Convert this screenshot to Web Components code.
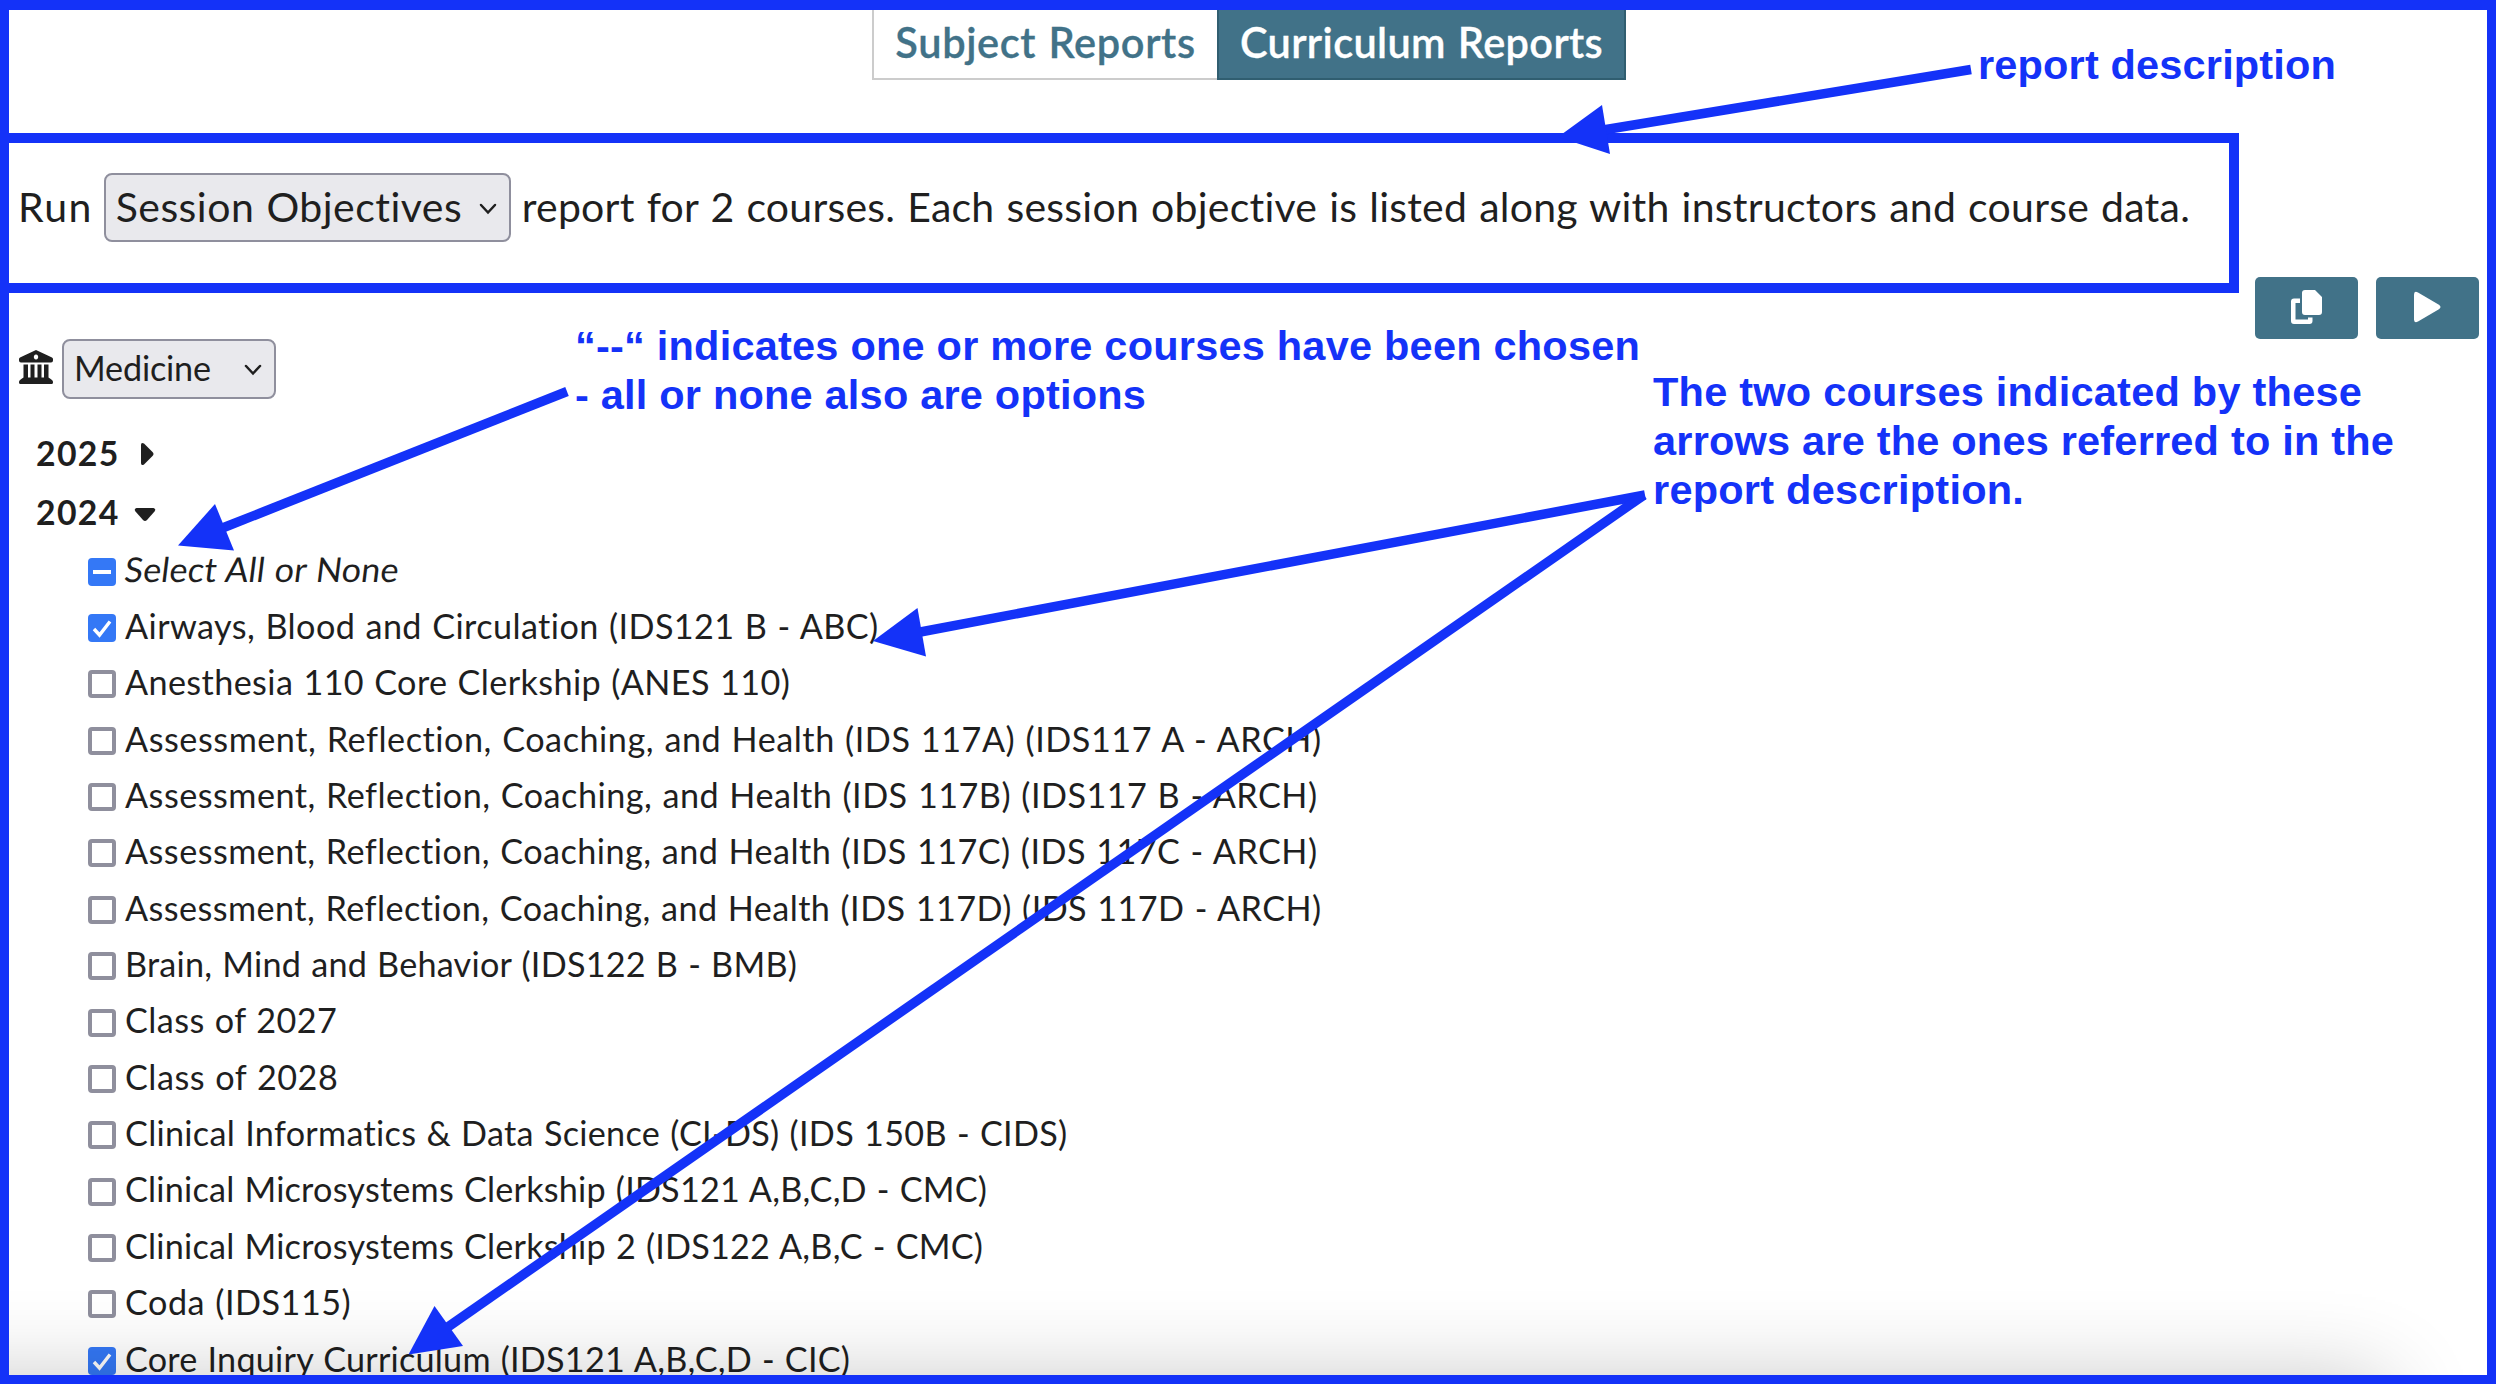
<!DOCTYPE html>
<html lang="en">
<head>
<meta charset="utf-8">
<title>Curriculum Reports</title>
<style>
html,body{margin:0;padding:0}
body{width:2496px;height:1384px;overflow:hidden;background:#fff;font-family:Lato,"Noto Sans",sans-serif;color:#1f1f1f}
</style>
</head>
<body>
<reports-page></reports-page>
<script>
// Text run that spreads its letters evenly to fill a given width.
class FitText extends HTMLElement{
  constructor(){
    super();
    this.attachShadow({mode:'open'}).innerHTML=`<style>:host{display:inline-block;white-space:pre;word-spacing:var(--word-gap,.03em)}</style><span><slot></slot></span>`;
  }
  connectedCallback(){
    const target=parseFloat(this.getAttribute('w'));
    const n=this.textContent.length;
    const natural=this.shadowRoot.querySelector('span').getBoundingClientRect().width;
    if(target&&natural)this.style.letterSpacing=((target-natural)/(n-.5)).toFixed(4)+'px';
  }
}

class ReportTab extends HTMLElement{
  constructor(){
    super();
    this.attachShadow({mode:'open'}).innerHTML=`<style>
      :host{display:flex;justify-content:center;box-sizing:border-box;height:70px;width:345px;border:2px solid #ccc;border-top:0;border-right:0;background:#fff;color:#417288;font-size:41.5px;font-weight:600;line-height:64px;-webkit-text-stroke:.3px currentColor}
      :host([active]){width:409px;background:#417288;border:2px solid #305e70;border-top:0;color:#fff}
    </style><slot></slot>`;
  }
}

class DropDown extends HTMLElement{
  constructor(){
    super();
    this.attachShadow({mode:'open'}).innerHTML=`<style>
      :host{display:flex;align-items:center;justify-content:space-between;box-sizing:border-box;background:#e9e9ed;border:2px solid #8f8f9d;border-radius:8px;padding:0 12px 2px 10px}
      svg{display:block;margin-top:4px}
    </style><slot></slot><svg width="18" height="12" viewBox="0 0 18 12"><path d="M2 2l7 7.5L16 2" fill="none" stroke="#1f1f1f" stroke-width="2.5" stroke-linecap="round"/></svg>`;
  }
}

class IconButton extends HTMLElement{
  constructor(){
    super();
    this.attachShadow({mode:'open'}).innerHTML=`<style>:host{display:flex;align-items:center;justify-content:center;box-sizing:border-box;width:103px;height:62px;padding-bottom:3px;border-radius:5px;background:#417288}</style><slot></slot>`;
  }
}

class CheckRow extends HTMLElement{
  connectedCallback(){
    const state=this.getAttribute('state');
    const mark=state==='on'?'<path d="M6 15l5.5 6L22 7.5" fill="none" stroke="#fff" stroke-width="3.4"/>':
      state==='mixed'?'<path d="M5 14h18" stroke="#fff" stroke-width="4"/>':'';
    const box=state?'<rect width="28" height="28" rx="4" fill="#3478f6"/>':
      '<rect x="2" y="2" width="24" height="24" rx="2" fill="#fff" stroke="#8f8f9d" stroke-width="4"/>';
    this.attachShadow({mode:'open'}).innerHTML=`<style>
      :host{display:flex;align-items:center;height:56.36px;line-height:57.4px;font-size:34.2px;gap:9px;flex:none}
      :host([state=mixed]) ::slotted(*){transform:skewX(-7deg)}
      svg{display:block;margin-top:5px}
    </style><svg width="28" height="28" viewBox="0 0 28 28">${box}${mark}</svg><slot></slot>`;
  }
}

class YearRow extends HTMLElement{
  constructor(){
    super();
    this.attachShadow({mode:'open'}).innerHTML=`<style>
      :host{display:flex;align-items:center;height:59px;line-height:59px;font-size:33.8px;font-weight:700;padding-left:27px}
      ::slotted(*){margin-top:2px}
      svg{display:block;margin-left:14px;margin-top:2px;overflow:visible}
    </style><slot></slot><svg width="22" height="24" viewBox="0 0 22 24"><path fill="#1f1f1f"/></svg>`;
  }
  connectedCallback(){
    this.shadowRoot.querySelector('path').setAttribute('d',this.hasAttribute('open')
      ?'M2.5 7h17q3 1 1 3.500l-7.500 8.500q-2 2-4 0L1.500 10.500Q-.5 8 2.500 7z'
      :'M7 3q0-3 3-1.500l8.500 8.500q2 2 0 4L10 22.500Q7 24 7 21z');
  }
}

// Hand-placed arrows and notes floating over the page.
class NoteLayer extends HTMLElement{
  constructor(){
    super();
    this.attachShadow({mode:'open'}).innerHTML=`<style>
      :host{position:absolute;inset:0;--word-gap:0px;color:#1432f8;font:bold 41.5px/48.800px "Liberation Sans",Arial,sans-serif}
      svg{position:absolute;inset:0}
      div{position:absolute;display:flex;flex-direction:column;align-items:flex-start}
    </style>
    <svg width="2496" height="1384" viewBox="0 0 2496 1384" fill="#1432f8" stroke="none">
      <g stroke="#1432f8" stroke-width="9.500">
        <path d="M1600 130.500L1971 69.500"/><path d="M220 529L567 391.500"/><path d="M915 633L1645 495"/><path d="M445 1329L1644 495"/>
      </g>
      <path d="M1558 137L1602 105L1610 154z"/>
      <path d="M178 545.500L215 504L234 550.500z"/>
      <path d="M873 641L917.500 608L926 656.500z"/>
      <path d="M408.500 1354.500L434.500 1306L463 1346z"/>
    </svg>
    <div style="left:1978px;top:41px"><fit-text w="358">report description</fit-text></div>
    <div style="left:575px;top:322px"><fit-text w="1065">“--“ indicates one or more courses have been chosen</fit-text><fit-text w="571">- all or none also are options</fit-text></div>
    <div style="left:1653px;top:368px"><fit-text w="709">The two courses indicated by these</fit-text><fit-text w="741">arrows are the ones referred to in the</fit-text><fit-text w="371">report description.</fit-text></div>`;
  }
}

const courses=[
  ['Select All or None',279,'mixed'],
  ['Airways, Blood and Circulation (IDS121 B - ABC)',754,'on'],
  ['Anesthesia 110 Core Clerkship (ANES 110)',665],
  ['Assessment, Reflection, Coaching, and Health (IDS 117A) (IDS117 A - ARCH)',1197],
  ['Assessment, Reflection, Coaching, and Health (IDS 117B) (IDS117 B - ARCH)',1193],
  ['Assessment, Reflection, Coaching, and Health (IDS 117C) (IDS 117C - ARCH)',1193],
  ['Assessment, Reflection, Coaching, and Health (IDS 117D) (IDS 117D - ARCH)',1197],
  ['Brain, Mind and Behavior (IDS122 B - BMB)',672],
  ['Class of 2027',212],
  ['Class of 2028',213],
  ['Clinical Informatics & Data Science (CI-DS) (IDS 150B - CIDS)',943],
  ['Clinical Microsystems Clerkship (IDS121 A,B,C,D - CMC)',862],
  ['Clinical Microsystems Clerkship 2 (IDS122 A,B,C - CMC)',858],
  ['Coda (IDS115)',226],
  ['Core Inquiry Curriculum (IDS121 A,B,C,D - CIC)',725,'on']
];

class ReportsPage extends HTMLElement{
  constructor(){
    super();
    this.attachShadow({mode:'open'}).innerHTML=`<style>
      :host{display:block;position:relative;width:2496px;height:1384px;overflow:hidden}
      main{box-sizing:border-box;height:1384px;border:9px solid #1432f8;border-top-width:10px;overflow:hidden;display:flex;flex-direction:column}
      nav{display:flex;padding-left:863px;height:123px;flex:none}
      .run{display:flex;height:206px;flex:none}
      .desc{box-sizing:border-box;width:2230px;height:160px;border:10px solid #1432f8;border-left:0;display:flex;padding:30px 0 0 9px;font-size:41px;line-height:67px}
      .desc drop-down{width:407px;height:69px;margin:0 11px 0 11px}
      .actions{display:flex;gap:18px;margin:144px 0 0 16px}
      .school{display:flex;align-items:center;height:60px;flex:none;padding-left:10px;gap:9px;font-size:34.200px;line-height:56px}
      .school drop-down{width:214px;height:60px}
      .school svg{margin-bottom:4px}
      .years{margin-top:24px;flex:none}
      .list{display:flex;flex-direction:column;padding-left:79px}
      .shade{position:absolute;inset:0 9px 9px;overflow:hidden}
      .shade i{position:absolute;left:-200px;width:2576px;top:1382px;height:300px;box-shadow:0 0 84px rgba(0,0,0,.24)}
    </style>
    <main>
      <nav><report-tab><fit-text w="300">Subject Reports</fit-text></report-tab><report-tab active><fit-text w="363">Curriculum Reports</fit-text></report-tab></nav>
      <div class="run">
        <section class="desc"><fit-text w="74">Run</fit-text><drop-down><fit-text w="347">Session Objectives</fit-text></drop-down><fit-text w="1669">report for 2 courses. Each session objective is listed along with instructors and course data.</fit-text></section>
        <div class="actions">
          <icon-button><svg width="31" height="34" viewBox="0 0 31 34"><path fill="#fff" d="M14 0h10l7 7v15a3 3 0 0 1-3 3H14a3 3 0 0 1-3-3V3a3 3 0 0 1 3-3zM3 8.500h6V13H4.500v16.500H17V27.500h4.500V31a3 3 0 0 1-3 3H3a3 3 0 0 1-3-3V11.500a3 3 0 0 1 3-3z"/></svg></icon-button>
          <icon-button><svg width="27" height="32" viewBox="0 0 27 32"><path fill="#fff" d="M0 3.500Q0-.5 4 1.500L24.500 13.500q4 2.500 0 5L4 30.500Q0 32.500 0 28.500z"/></svg></icon-button>
        </div>
      </div>
      <div class="school">
        <svg width="34" height="34" viewBox="0 0 34 34"><path fill="#1f1f1f" fill-rule="evenodd" d="M17 0L33 7.500Q34 8 34 9V10.500Q34 12.500 32 12.500H2Q0 12.500 0 10.500V9Q0 8 1 7.500zM17 4.500a2.200 2.500 0 1 0 .01 0zM4.500 14.500h4.500V27.500h2.500V14.500h4V27.500h3V14.500h4V27.500h2.500V14.500h4.500V27.500l1.500 1 2 1.500q1 .8 1 2V32.500q0 1.500-1.500 1.500h-31Q0 34 0 32.500V32q0-1.200 1-2l2-1.500 1.500-1z"/></svg>
        <drop-down><fit-text w="137">Medicine</fit-text></drop-down>
      </div>
      <div class="years">
        <year-row><fit-text w="83">2025</fit-text></year-row>
        <year-row open><fit-text w="83">2024</fit-text></year-row>
        <div class="list">${courses.map(([t,w,s])=>`<check-row${s?` state="${s}"`:''}><fit-text w="${w}">${t.replace('&','&amp;')}</fit-text></check-row>`).join('')}</div>
      </div>
    </main>
    <div class="shade"><i></i></div>
    <note-layer></note-layer>`;
  }
}

customElements.define('report-tab',ReportTab);
customElements.define('drop-down',DropDown);
customElements.define('icon-button',IconButton);
customElements.define('check-row',CheckRow);
customElements.define('year-row',YearRow);
customElements.define('note-layer',NoteLayer);
customElements.define('reports-page',ReportsPage);
customElements.define('fit-text',FitText);
</script>
</body>
</html>
